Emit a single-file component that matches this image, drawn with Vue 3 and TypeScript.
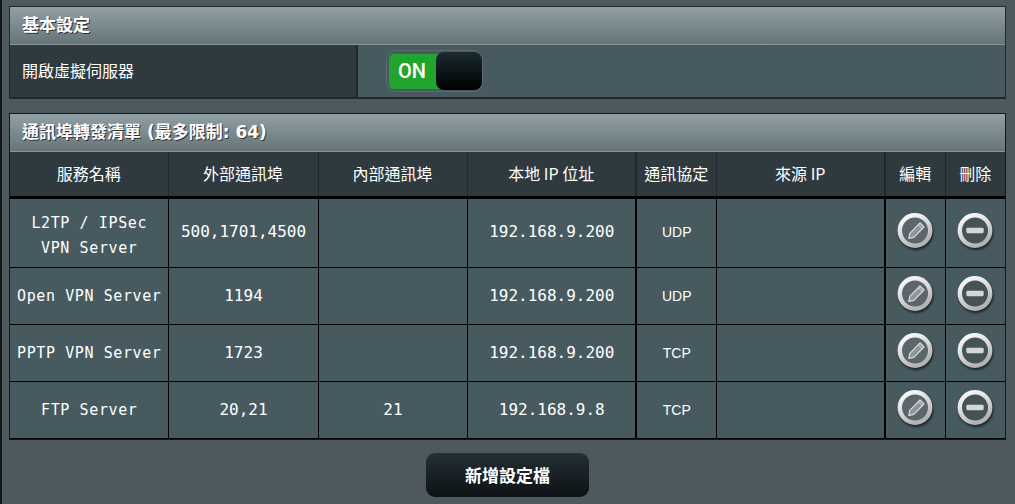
<script setup lang="ts">
interface Rule {
  name: string[]
  ext: string
  int: string
  ip: string
  proto: string
  src: string
}

const rules: Rule[] = [
  { name: ['L2TP / IPSec', 'VPN Server'], ext: '500,1701,4500', int: '', ip: '192.168.9.200', proto: 'UDP', src: '' },
  { name: ['Open VPN Server'], ext: '1194', int: '', ip: '192.168.9.200', proto: 'UDP', src: '' },
  { name: ['PPTP VPN Server'], ext: '1723', int: '', ip: '192.168.9.200', proto: 'TCP', src: '' },
  { name: ['FTP Server'], ext: '20,21', int: '21', ip: '192.168.9.8', proto: 'TCP', src: '' },
]

const heads = ['服務名稱', '外部通訊埠', '內部通訊埠', '本地 IP 位址', '通訊協定', '來源 IP', '編輯', '刪除']
</script>

<template>
  <div class="page">
    <section class="panel first">
      <div class="title">基本設定</div>
      <div class="setting">
        <div class="label">開啟虛擬伺服器</div>
        <div class="value">
          <div class="switch">
            <div class="track">
              <span class="on">ON</span>
              <span class="knob"></span>
            </div>
          </div>
        </div>
      </div>
    </section>

    <section class="panel second">
      <div class="title">通訊埠轉發清單 (最多限制: 64)</div>
      <table class="list">
        <colgroup>
          <col style="width: 158px" />
          <col style="width: 150px" />
          <col style="width: 149px" />
          <col style="width: 169px" />
          <col style="width: 80px" />
          <col style="width: 169px" />
          <col style="width: 60px" />
          <col style="width: 60px" />
        </colgroup>
        <thead>
          <tr>
            <th v-for="h in heads" :key="h">{{ h }}</th>
          </tr>
        </thead>
        <tbody>
          <tr v-for="(r, i) in rules" :key="r.ip + i" :class="{ tall: i === 0 }">
            <td class="mono name">
              <div v-for="line in r.name" :key="line">{{ line }}</div>
            </td>
            <td class="mono">{{ r.ext }}</td>
            <td class="mono">{{ r.int }}</td>
            <td class="mono">{{ r.ip }}</td>
            <td class="proto">{{ r.proto }}</td>
            <td class="mono">{{ r.src }}</td>
            <td class="edit">
              <svg class="icon" width="38" height="38" viewBox="0 0 38 38">
                <defs>
                  <linearGradient :id="'ringA' + i" x1="0" y1="0" x2="0.5" y2="1">
                    <stop offset="0" stop-color="#ffffff" />
                    <stop offset="0.6" stop-color="#d6d6d6" />
                    <stop offset="1" stop-color="#b4b4b4" />
                  </linearGradient>
                </defs>
                <circle cx="19" cy="17.5" r="15.2" fill="#5a666b" :style="{ stroke: `url(#ringA${i})` }" stroke-width="4.4" />
                <path d="M12.8 25.3l1-4.9L24 10l4 4-10.2 10.4z" fill="#8d9597" stroke="#dcdcdc" stroke-width="1.2" stroke-linejoin="round" />
                <path d="M22.4 11.8l4 4" stroke="#dcdcdc" stroke-width="1" fill="none" />
              </svg>
            </td>
            <td class="del">
              <svg class="icon" width="38" height="38" viewBox="0 0 38 38">
                <defs>
                  <linearGradient :id="'ringB' + i" x1="0" y1="0" x2="0.5" y2="1">
                    <stop offset="0" stop-color="#ffffff" />
                    <stop offset="0.6" stop-color="#d6d6d6" />
                    <stop offset="1" stop-color="#b4b4b4" />
                  </linearGradient>
                </defs>
                <circle cx="19" cy="17.5" r="15.2" fill="#475257" :style="{ stroke: `url(#ringB${i})` }" stroke-width="4.4" />
                <rect x="10.3" y="14.8" width="17.4" height="5.4" rx="1.4" fill="#d6d6d6" />
              </svg>
            </td>
          </tr>
        </tbody>
      </table>
    </section>

    <div class="actions">
      <button class="add" type="button">新增設定檔</button>
    </div>
  </div>
</template>

<style>
html,
body {
  margin: 0;
  background: #4d595d;
}
</style>

<style scoped>
.page {
  box-sizing: border-box;
  width: 1015px;
  height: 504px;
  overflow: hidden;
  padding: 6px 9px 0 7px;
  background: #4d595d;
  border-left: 2px solid #15181a;
  font-family: 'Noto Sans CJK TC', 'Liberation Sans', sans-serif;
  color: #fff;
}

.panel {
  width: 997px;
  border: 1px solid #22282b;
  box-sizing: border-box;
}

.second {
  margin-top: 14px;
  border-color: #14181a;
}

.title {
  box-sizing: border-box;
  height: 38px;
  line-height: 36px;
  padding-left: 12px;
  font-size: 17px;
  font-weight: 700;
  font-family: 'DejaVu Sans', 'Noto Sans CJK TC', sans-serif;
  background: linear-gradient(to bottom, #92a0a5, #66757a);
  border-bottom: 1px solid #8a979b;
  text-shadow: 1px 1px 0 #333;
}

.setting {
  display: flex;
  height: 52px;
  border-bottom: 1px solid #22282b;
}

.label {
  box-sizing: border-box;
  width: 348px;
  padding-left: 12px;
  line-height: 50px;
  font-size: 16px;
  background: #2f3a3e;
  border-right: 2px solid #22282b;
}

.value {
  flex: 1;
  display: flex;
  align-items: center;
  padding-left: 28px;
  background: #475a5f;
}

.switch {
  box-sizing: border-box;
  width: 97px;
  height: 42px;
  padding: 3px 2px;
  border: 1px solid #5e6a6e;
  border-radius: 10px;
}

.track {
  position: relative;
  height: 35px;
  border-radius: 5px;
  background: #22a52f;
}

.on {
  position: absolute;
  left: 9px;
  top: 0;
  line-height: 35px;
  font-size: 20px;
  font-weight: 500;
  font-family: 'Roboto', sans-serif;
}

.knob {
  position: absolute;
  right: -2px;
  top: -2px;
  width: 46px;
  height: 38px;
  border-radius: 8px;
  background: linear-gradient(to bottom, #1b2b30, #000);
}

.list {
  table-layout: fixed;
  width: 995px;
  border-collapse: collapse;
  font-size: 16px;
}

th {
  box-sizing: border-box;
  height: 45px;
  padding: 0 0 2px 0;
  font-weight: 400;
  background: #2f3a3e;
  border-right: 1px solid #22282b;
  border-bottom: 3px solid #000;
  font-size: 16px;
}

th:last-child,
td:last-child {
  border-right: 0;
}

td {
  box-sizing: border-box;
  height: 57px;
  padding: 0 0 0 1px;
  text-align: center;
  background: #475a5f;
  border-right: 1px solid #000;
  border-bottom: 1px solid #000;
}

tr.tall td {
  height: 70px;
  padding-bottom: 2px;
}

th:nth-child(4),
td:nth-child(4),
th:nth-child(6),
td:nth-child(6) {
  border-right-width: 2px;
}

.mono {
  font-family: 'DejaVu Sans Mono', 'Liberation Mono', monospace;
  font-size: 16px;
}

.name {
  font-size: 15px;
  letter-spacing: 0.6px;
  line-height: 25px;
  padding-top: 2px;
}

tr.tall .name {
  padding-top: 6px;
  padding-bottom: 0;
}

.proto {
  font-family: 'Liberation Sans', sans-serif;
  font-size: 14px;
}

td.edit,
td.del {
  padding: 0 0 2px 0;
}

.icon {
  display: block;
  margin: 0 auto;
  filter: drop-shadow(1px 2px 1px rgba(0, 0, 0, 0.6));
}

tr.tall .icon {
  margin-top: -2px;
}

tr.tall td.edit,
tr.tall td.del {
  padding: 0;
}

.actions {
  display: flex;
  justify-content: center;
  margin-top: 13px;
}

.add {
  width: 163px;
  height: 44px;
  border: 0;
  border-radius: 9px;
  color: #fff;
  font-size: 17px;
  font-weight: 700;
  font-family: 'Noto Sans CJK TC', sans-serif;
  background: linear-gradient(to bottom, #233035, #0d1214);
}
</style>
